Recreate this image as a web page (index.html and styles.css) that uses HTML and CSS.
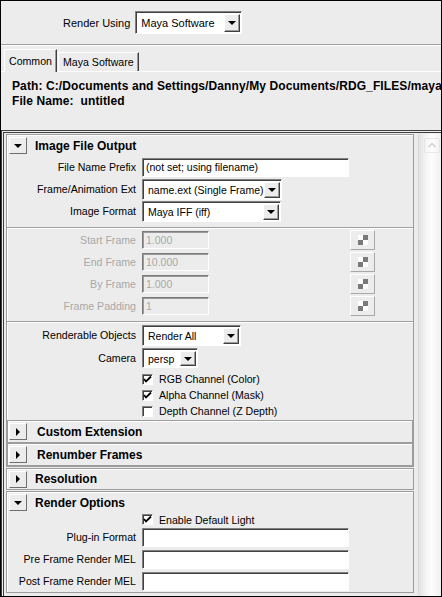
FILE: index.html
```html
<!DOCTYPE html>
<html lang="en">
<head>
    <meta charset="UTF-8">
    <title>Render Settings</title>
    <link rel="stylesheet" href="styles.css">
</head>
<body>
    <div class="window">
        <div class="render-using">
            <span class="top-label">Render Using</span>
            <div class="select top-select">
                <span class="select-text">Maya Software</span>
                <span class="arrow"></span>
            </div>
        </div>

        <div class="tabs">
            <div class="tab active">Common</div>
            <div class="tab">Maya Software</div>
        </div>

        <div class="tab-body">
            <div class="info">
                <div>Path: C:/Documents and Settings/Danny/My Documents/RDG_FILES/maya/</div>
                <div>File Name:&nbsp; untitled</div>
            </div>

            <div class="scroll">
                <div class="panel">
                    <!-- Image File Output -->
                    <div class="frame">
                        <div class="frame-head">
                            <span class="toggle down"></span>
                            <span class="frame-title">Image File Output</span>
                        </div>
                        <div class="row">
                            <label>File Name Prefix</label>
                            <div class="field">(not set; using filename)</div>
                        </div>
                        <div class="row">
                            <label>Frame/Animation Ext</label>
                            <div class="select w-ext">
                                <span class="select-text">name.ext (Single Frame)</span>
                                <span class="arrow"></span>
                            </div>
                        </div>
                        <div class="row">
                            <label>Image Format</label>
                            <div class="select w-format">
                                <span class="select-text">Maya IFF (iff)</span>
                                <span class="arrow"></span>
                            </div>
                        </div>

                        <div class="sep"></div>

                        <div class="row off">
                            <label>Start Frame</label>
                            <div class="field small">1.000</div>
                            <span class="spin"><span class="checker"></span></span>
                        </div>
                        <div class="row off">
                            <label>End Frame</label>
                            <div class="field small">10.000</div>
                            <span class="spin"><span class="checker"></span></span>
                        </div>
                        <div class="row off">
                            <label>By Frame</label>
                            <div class="field small">1.000</div>
                            <span class="spin"><span class="checker"></span></span>
                        </div>
                        <div class="row off">
                            <label>Frame Padding</label>
                            <div class="field small">1</div>
                            <span class="spin"><span class="checker"></span></span>
                        </div>

                        <div class="sep sep-2"></div>

                        <div class="row tall">
                            <label>Renderable Objects</label>
                            <div class="select w-objects">
                                <span class="select-text">Render All</span>
                                <span class="arrow"></span>
                            </div>
                        </div>
                        <div class="row">
                            <label>Camera</label>
                            <div class="select w-camera">
                                <span class="select-text">persp</span>
                                <span class="arrow"></span>
                            </div>
                        </div>

                        <div class="checks">
                            <div class="check">
                                <span class="box"><svg width="9" height="9" viewBox="0 0 9 9"><path d="M1 4 L3 6.5 L8 1.5" fill="none" stroke="#000" stroke-width="1.8"/></svg></span>
                                RGB Channel (Color)
                            </div>
                            <div class="check">
                                <span class="box"><svg width="9" height="9" viewBox="0 0 9 9"><path d="M1 4 L3 6.5 L8 1.5" fill="none" stroke="#000" stroke-width="1.8"/></svg></span>
                                Alpha Channel (Mask)
                            </div>
                            <div class="check">
                                <span class="box"></span>
                                Depth Channel (Z Depth)
                            </div>
                        </div>

                        <div class="frame nested">
                            <div class="frame-head">
                                <span class="toggle right"></span>
                                <span class="frame-title">Custom Extension</span>
                            </div>
                        </div>
                        <div class="frame nested">
                            <div class="frame-head">
                                <span class="toggle right"></span>
                                <span class="frame-title">Renumber Frames</span>
                            </div>
                        </div>
                    </div>

                    <!-- Resolution -->
                    <div class="frame closed">
                        <div class="frame-head">
                            <span class="toggle right"></span>
                            <span class="frame-title">Resolution</span>
                        </div>
                    </div>

                    <!-- Render Options -->
                    <div class="frame">
                        <div class="frame-head">
                            <span class="toggle down"></span>
                            <span class="frame-title">Render Options</span>
                        </div>
                        <div class="checks light">
                            <div class="check">
                                <span class="box"><svg width="9" height="9" viewBox="0 0 9 9"><path d="M1 4 L3 6.5 L8 1.5" fill="none" stroke="#000" stroke-width="1.8"/></svg></span>
                                Enable Default Light
                            </div>
                        </div>
                        <div class="row">
                            <label>Plug-in Format</label>
                            <div class="field"></div>
                        </div>
                        <div class="row">
                            <label>Pre Frame Render MEL</label>
                            <div class="field"></div>
                        </div>
                        <div class="row">
                            <label>Post Frame Render MEL</label>
                            <div class="field"></div>
                        </div>
                    </div>
                </div>

                <div class="scrollbar">
                    <span class="up">
                        <svg width="14" height="13" viewBox="0 0 14 13"><path d="M3.5 8 L7 4.5 L10.5 8" fill="none" stroke="#d0d0d0" stroke-width="1.5"/></svg>
                    </span>
                </div>
            </div>
        </div>
    </div>
</body>
</html>
```

FILE: styles.css
```css
* {
    box-sizing: border-box;
}

body {
    margin: 0;
    font-family: 'Liberation Sans', Arial, sans-serif;
    font-size: 10.6px;
    color: #000;
}

.window {
    width: 442px;
    height: 597px;
    border: 1px solid #000;
    background: #ececec;
    overflow: hidden;
    display: flex;
    flex-direction: column;
}

/* top bar */
.render-using {
    height: 44px;
    flex: none;
    display: flex;
    align-items: center;
    padding-left: 62px;
    gap: 5px;
    border-bottom: 1px solid #a0a0a0;
}

.top-label {
    font-size: 11px;
}

/* tabs */
.tabs {
    height: 26px;
    flex: none;
    display: flex;
    align-items: flex-end;
    padding-left: 3px;
    border-top: 1px solid #fff;
}

.tab {
    position: relative;
    height: 19px;
    padding: 3px 4px 0 4px;
    margin-left: 1px;
    border-top: 1px solid #fff;
    border-left: 1px solid #fff;
    border-right: 1px solid #404040;
    box-shadow: inset -1px 0 0 #9a9a9a;
    font-size: 10.6px;
}

.tab.active {
    height: 23px;
    margin-left: 0;
    margin-bottom: -1px;
    padding-top: 5px;
    background: #ececec;
    z-index: 1;
}

.tab-body {
    flex: 1;
    display: flex;
    flex-direction: column;
    border-top: 1px solid #fff;
    min-height: 0;
}

.info {
    height: 58px;
    flex: none;
    padding: 7px 0 0 11px;
    font-weight: bold;
    font-size: 12px;
    line-height: 15px;
    letter-spacing: 0.1px;
    white-space: nowrap;
    overflow: hidden;
}

/* scroll area */
.scroll {
    flex: 1;
    display: flex;
    min-height: 0;
    border-top: 3px double #404040;
    border-left: 3px double #404040;
    padding: 1px 0 0 2px;
}

.panel {
    width: 408px;
    flex: none;
    overflow: hidden;
}

.scrollbar {
    width: 23px;
    flex: none;
    margin-left: 4px;
    padding: 4px 0 0 5px;
    border-left: 1px solid #dadada;
    background: linear-gradient(to right, #e2e2e2, #f6f6f6 35%, #fdfdfd 60%, #f0f0f0);
}

.up {
    display: flex;
    align-items: center;
    justify-content: center;
    width: 16px;
    height: 15px;
    border: 1px solid #e6e6e6;
    border-radius: 2px;
}

/* frames */
.frame {
    border: 1px solid #9c9c9c;
    box-shadow: inset 1px 1px 0 #fff;
}

.frame + .frame {
    margin-top: 1px;
}

.checks + .frame.nested {
    margin-top: 1px;
}

.frame.nested + .frame.nested {
    margin-top: 0;
}

.frame-head {
    display: flex;
    align-items: center;
    height: 21px;
    padding-left: 2px;
    gap: 8px;
}

.frame.closed .frame-head {
    height: 20px;
}

.nested .frame-head {
    padding-left: 1px;
    gap: 10px;
}

.frame-title {
    font-weight: bold;
    font-size: 12px;
}

.toggle {
    width: 18px;
    height: 17px;
    display: flex;
    align-items: center;
    justify-content: center;
    border: 1px solid;
    border-color: #fff #6e6e6e #6e6e6e #fff;
}

.toggle.down::after {
    content: "";
    border-left: 4px solid transparent;
    border-right: 4px solid transparent;
    border-top: 4px solid #000;
}

.toggle.right::after {
    content: "";
    border-top: 4px solid transparent;
    border-bottom: 4px solid transparent;
    border-left: 4px solid #000;
}

/* separators */
.sep {
    height: 2px;
    margin-top: 5px;
    border-top: 1px solid #a0a0a0;
    border-bottom: 1px solid #fff;
}

.sep-2 {
    margin-top: 4px;
}

/* rows */
.row {
    display: flex;
    align-items: center;
    height: 22px;
}

.row.tall {
    height: 24px;
}

.row label {
    width: 129px;
    margin-right: 6px;
    text-align: right;
    font-size: 10.6px;
    white-space: nowrap;
}

.row.off label {
    color: #a8a8a8;
}

.field {
    width: 207px;
    height: 19px;
    padding-left: 3px;
    background: #fff;
    border: 1px solid;
    border-color: #808080 #fff #fff #808080;
    box-shadow: inset 1px 1px 0 #404040;
    line-height: 17px;
    font-size: 10.5px;
    white-space: nowrap;
}

.field.small {
    width: 67px;
    height: 18px;
    background: #ececec;
    color: #a8a8a8;
    box-shadow: inset 1px 1px 0 #9a9a9a;
    border-color: #7a7a7a #fff #fff #7a7a7a;
}

.spin {
    width: 25px;
    height: 20px;
    margin-left: 141px;
    display: flex;
    align-items: center;
    justify-content: center;
    border: 1px solid;
    border-color: #fff #a8a8a8 #a8a8a8 #fff;
}

.checker {
    width: 10px;
    height: 10px;
    background:
        linear-gradient(#7a7a7a, #7a7a7a) right top / 5px 5px no-repeat,
        linear-gradient(#7a7a7a, #7a7a7a) left bottom / 5px 5px no-repeat,
        #fff;
}

/* dropdowns */
.select {
    display: flex;
    height: 21px;
    background: #fff;
    border: 1px solid;
    border-color: #808080 #fff #fff #808080;
    box-shadow: inset 1px 1px 0 #404040;
    padding: 2px 1px 1px 2px;
}

.select-text {
    flex: 1;
    padding-left: 3px;
    line-height: 16px;
    font-size: 10.5px;
    white-space: nowrap;
}

.arrow {
    width: 16px;
    display: flex;
    align-items: center;
    justify-content: center;
    background: #ececec;
    border: 1px solid;
    border-color: #fff #404040 #404040 #fff;
    box-shadow: inset -1px -1px 0 #9a9a9a;
}

.arrow::after {
    content: "";
    border-left: 4px solid transparent;
    border-right: 4px solid transparent;
    border-top: 4px solid #000;
}

.top-select {
    width: 107px;
    height: 23px;
}

.top-select .select-text {
    font-size: 11px;
    line-height: 18px;
}

.w-ext {
    width: 140px;
}

.w-format {
    width: 139px;
}

.w-objects {
    width: 99px;
}

.w-camera {
    width: 56px;
    height: 20px;
}

/* checkboxes */
.checks {
    margin-top: 2px;
}

.checks.light {
    margin-top: 0;
}

.check {
    display: flex;
    align-items: center;
    gap: 6px;
    height: 16px;
    padding-left: 135px;
    font-size: 10.6px;
}

.checks.light .check {
    height: 13px;
}

.box {
    width: 11px;
    height: 11px;
    display: flex;
    align-items: center;
    justify-content: center;
    background: #fff;
    border: 1px solid;
    border-color: #808080 #fff #fff #808080;
    box-shadow: inset 1px 1px 0 #404040;
}
```
